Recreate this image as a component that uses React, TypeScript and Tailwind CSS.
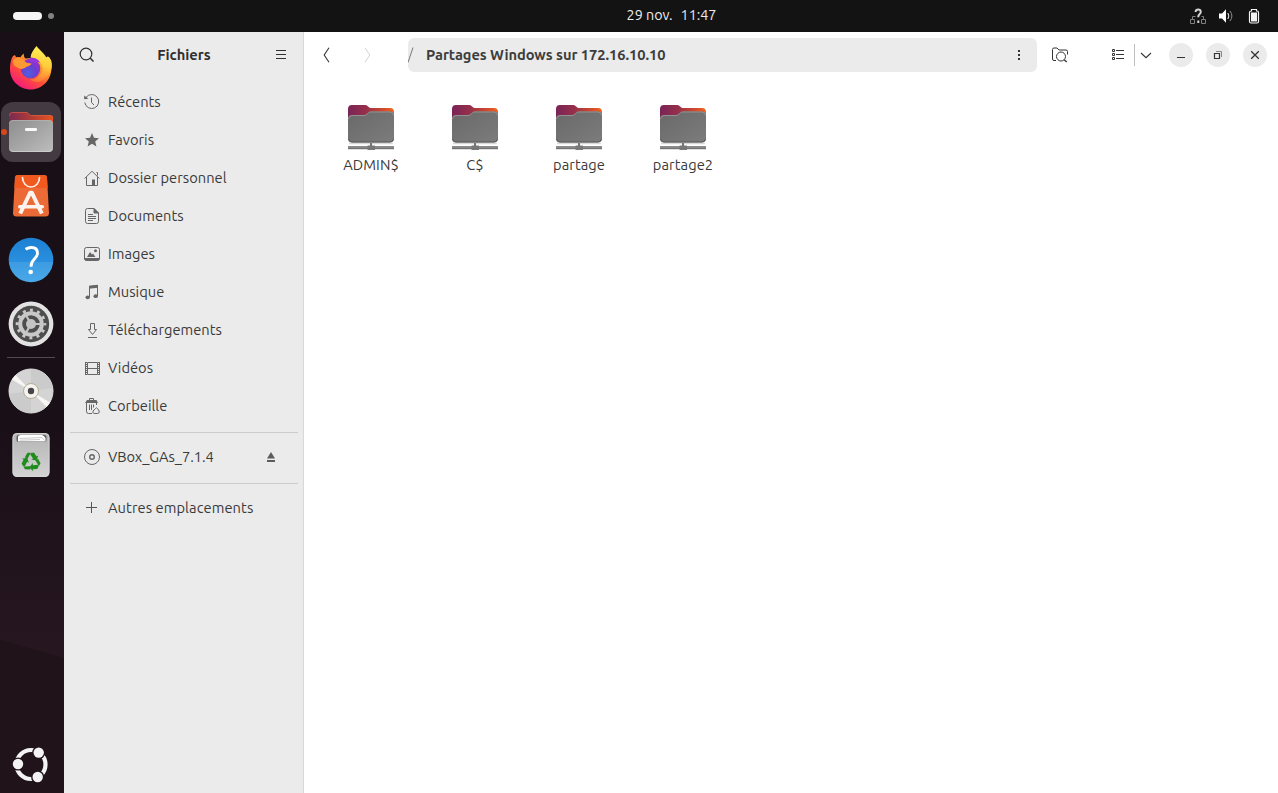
import type { ReactNode } from "react";

function Firefox() {
  return (
    <svg width="46" height="46" viewBox="0 0 46 46" fill="none">
      <defs>
        <linearGradient id="ffBody" x1="36" y1="6" x2="10" y2="42" gradientUnits="userSpaceOnUse">
          <stop offset="0" stopColor="#fff44f" />
          <stop offset=".3" stopColor="#ffa52b" />
          <stop offset=".62" stopColor="#ff5038" />
          <stop offset="1" stopColor="#f4187f" />
        </linearGradient>
        <radialGradient id="ffGlobe" cx=".4" cy=".75" r=".8">
          <stop offset="0" stopColor="#4f5fe0" />
          <stop offset=".5" stopColor="#6a3fd0" />
          <stop offset="1" stopColor="#a92bc8" />
        </radialGradient>
        <linearGradient id="ffTop" x1="34" y1="0" x2="26" y2="40" gradientUnits="userSpaceOnUse">
          <stop offset="0" stopColor="#fff65a" />
          <stop offset=".5" stopColor="#ffcb3a" />
          <stop offset=".8" stopColor="#ff8a36" />
          <stop offset="1" stopColor="#ff5a3a" />
        </linearGradient>
      </defs>
      <path d="M3.500 14c.6-2.400 2-3.400 3.600-4 .1 1 .6 1.800 1.400 2.200 1.200-.2 2.700-.2 4 0 1.100-1.300 2.200-2.900 3.300-3.600-.1 1.700.1 3.500 1.500 4.900L24 13l17-1c2 4 2.500 7 2.500 10.500C43.500 35 34 44.500 23 44.500S2 36 2 24.500C1.900 20.500 2.500 17 3.500 14Z" fill="url(#ffBody)" />
      <path d="M28.500 1c-3 3.500-5.500 7-6 11.500l8 3c4 3 5 7 3.500 11-2 5-7 8-12 8 5.500 4 13 3 17-3 4.500-5 5.500-10 4.500-15-.6-2.500-2.600-4.300-4-5.500.1 1.200 0 1.700-.7 2.500C37 8.500 32 6 28.500 1Z" fill="url(#ffTop)" />
      <circle cx="22.500" cy="23.500" r="9.800" fill="url(#ffGlobe)" />
      <path d="M22 13c4-.8 8.500 1 10 4.500-1.500-.6-3-.7-4-.4 1.500 1 2.500 2.500 2.700 4-2-3.500-5.700-4.500-9.200-4.600Z" fill="#9537da" />
      <path d="M5 15c4-3 9-2.500 12 1.500 1 1.600 4.500 1.500 6.500 2-.4 2.200-4 2.700-5.500 3.700-1.500 1.200-2.500 1.200-4.800 1.800-2.500-.7-3.500-1.500-4.700-2C6.500 21 5 20 5 15Z" fill="#ff9a32" />
    </svg>
  );
}

function FilesApp() {
  return (
    <svg width="46" height="44" viewBox="0 0 46 44">
      <defs>
        <linearGradient id="faBack" x1="0" x2="1" y1="0" y2="0">
          <stop offset="0" stopColor="#772953" />
          <stop offset=".5" stopColor="#b13c37" />
          <stop offset="1" stopColor="#e95420" />
        </linearGradient>
        <linearGradient id="faFront" x1="0" x2="1" y1="0" y2="1">
          <stop offset="0" stopColor="#8d8d8d" />
          <stop offset="1" stopColor="#bdbdbd" />
        </linearGradient>
      </defs>
      <path d="M1 14V5q0-3 3-3h14q1.500 0 2.500 1.200L22.500 5H42q3 0 3 3v9H1Z" fill="url(#faBack)" />
      <path d="M1.500 6q0-3.500 3-3.500h13.500q1.500 0 2.500 1.200l2 1.800H42q3 0 3 3" fill="none" stroke="#e2643f" strokeOpacity=".6" />
      <rect x="1" y="10" width="44" height="32" rx="4" fill="url(#faFront)" />
      <path d="M1.500 13.500q.5-3 3.500-3h36q3 0 3.500 3" fill="none" stroke="#b5b5b5" strokeOpacity=".7" />
      <path d="M2 39.500q1 2 3 2h36q2 0 3-2" fill="none" stroke="#d6d6d6" strokeOpacity=".7" />
      <rect x="17" y="18" width="12" height="3" rx="1.200" fill="#fafafa" />
    </svg>
  );
}

function AppCenter() {
  return (
    <svg width="38" height="44" viewBox="0 0 38 44" fill="none">
      <path d="M5.500 1h27q2.300 0 2.500 2.500L37 39q0 3.500-3.500 3.500h-29Q1 42.500 1 39L3 3.500Q3.200 1 5.500 1Z" fill="#ec6a35" />
      <path d="M5.500 1h27q2.300 0 2.500 2.500l.6 10.500H2.400L3 3.500Q3.200 1 5.500 1Z" fill="#f05a1e" />
      <path d="M10.500 3.500a8.500 9.500 0 0 0 17 0" stroke="#fdeee7" strokeWidth="1.700" strokeLinecap="round" />
      <path d="M18.500 18 8.200 39.500M19.500 18l10.300 21.500" stroke="#fdf3ee" strokeWidth="4" />
      <path d="M17.500 16.800h3l2.500 5h-8z" fill="#fdf3ee" />
      <rect x="6" y="31" width="26" height="3.600" rx="1.800" fill="#fdf3ee" />
    </svg>
  );
}

function Help() {
  return (
    <svg width="46" height="46" viewBox="0 0 46 46" fill="none">
      <defs>
        <linearGradient id="helpTop" x1="0" x2="0" y1="0" y2="1">
          <stop offset="0" stopColor="#1d80d3" />
          <stop offset=".54" stopColor="#2a8fde" />
          <stop offset=".55" stopColor="#3d9be1" />
          <stop offset="1" stopColor="#4aa9ea" />
        </linearGradient>
      </defs>
      <circle cx="23" cy="23" r="22.300" fill="url(#helpTop)" />
      <path d="M17.500 12.200q3-1.800 6-1.700c4 .1 6 2.400 6 5.600 0 3.100-1.700 4.700-3.700 6.600-2 1.900-2.800 3.600-2.800 7" stroke="#fff" strokeWidth="2.900" />
      <circle cx="22.700" cy="35" r="2.300" fill="#fff" />
    </svg>
  );
}

function Settings() {
  return (
    <svg width="46" height="46" viewBox="0 0 46 46" fill="none">
      <circle cx="23" cy="23" r="22.400" fill="#e2e2e2" />
      <circle cx="23" cy="23" r="18.200" fill="#4d4d4d" />
      <circle cx="23" cy="23" r="13.800" stroke="#c8c8c8" strokeWidth="3" strokeDasharray="3 4.226" strokeDashoffset="1.500" />
      <circle cx="23" cy="23" r="10.800" stroke="#c8c8c8" strokeWidth="4" />
      <circle cx="23" cy="23" r="5" fill="#c4c4c4" />
      <path d="M23 23h10M23 23l-5-8.700M23 23l-5 8.700" stroke="#c4c4c4" strokeWidth="2.200" />
    </svg>
  );
}

function Disc() {
  return (
    <svg width="46" height="46" viewBox="0 0 46 46" fill="none">
      <circle cx="23" cy="23" r="22" fill="#d4d4d4" stroke="#dedede" />
      <path d="M23 23V1A22 22 0 0 1 44.500 20ZM23 23v22A22 22 0 0 1 1.500 26Z" fill="#cbcbcb" />
      <path d="M23 23 4 11.500q1.500-2.500 3.500-4.500Zm0 0 19 11.500q-1.500 2.500-3.500 4.500Z" fill="#f7f6f3" />
      <circle cx="23" cy="23" r="7.500" fill="#f5f3ef" stroke="#b6ab94" />
      <circle cx="23" cy="23" r="3.200" fill="#464646" />
    </svg>
  );
}

function Trash() {
  return (
    <svg width="40" height="46" viewBox="0 0 40 46" fill="none">
      <defs>
        <linearGradient id="trashBody" x1="0" x2="0" y1="0" y2="1">
          <stop offset="0" stopColor="#b4b4b4" />
          <stop offset="1" stopColor="#d3d3d3" />
        </linearGradient>
      </defs>
      <rect x="1.500" y="1" width="37" height="44" rx="4.500" fill="url(#trashBody)" />
      <rect x="2" y="1.500" width="36" height="43" rx="4" stroke="#d8d8d8" strokeOpacity=".8" />
      <rect x="5.500" y="3" width="30" height="7" rx="2" fill="#606060" />
      <path d="M7 9.500V5q0-2 3-2h21q3 1 3.500 3.500v3Z" fill="#fff" />
      <path d="M8.500 6.500 31 5.500l2.500 3M9 8.200l20-.7" stroke="#bdbdbd" strokeWidth=".8" />
      <g transform="translate(20 29.800)" fill="#1f8c1c">
        {[0, 120, 240].map((a) => (
          <g key={a} transform={`rotate(${a})`}>
            <path d="M-6.200-4.500-3.500-9H-.2L-3.600-2.900Z" />
            <path d="M.3-9H3.200L5.500-5.300 7.300-6.300 5.500-1.300.2-2.300 2-3.300-.8-7.500Z" />
          </g>
        ))}
      </g>
    </svg>
  );
}

function UbuntuLogo() {
  return (
    <svg width="38" height="38" viewBox="0 0 38 38" fill="none">
      <circle cx="19" cy="18.500" r="14.500" stroke="#f3f3f3" strokeWidth="4.200" />
      <circle cx="26.700" cy="6.600" r="6.600" fill="#20141a" />
      <circle cx="6" cy="18" r="6.600" fill="#20141a" />
      <circle cx="25.700" cy="31" r="6.600" fill="#20141a" />
      <circle cx="26.700" cy="6.600" r="5.200" fill="#f3f3f3" />
      <circle cx="6" cy="18" r="5.200" fill="#f3f3f3" />
      <circle cx="25.700" cy="31" r="5.200" fill="#f3f3f3" />
    </svg>
  );
}

function Svg({ children, size = 16, className = "" }: { children: ReactNode; size?: number; className?: string }) {
  return (
    <svg width={size} height={size} viewBox={`0 0 ${size} ${size}`} fill="none" stroke="currentColor" className={`shrink-0 ${className}`}>
      {children}
    </svg>
  );
}

const places = [
  {
    name: "Récents",
    icon: (
      <>
        <path d="M2 3.500A7 7 0 1 1 .8 8.500" />
        <path d="M.2 5.200V1.600l4.200 3.200Z" fill="currentColor" stroke="none" />
        <path d="M7.500 3.500v5l2.500 2.500" />
      </>
    ),
  },
  {
    name: "Favoris",
    icon: <path d="m8 1 2 4.800 5 .4-3.800 3.300 1.200 4.900L8 11.800l-4.400 2.600 1.200-4.900L1 6.200l5-.4Z" fill="currentColor" stroke="none" />,
  },
  {
    name: "Dossier personnel",
    icon: (
      <>
        <path d="M.7 8.500 8 1.200l7.300 7.300M2.500 7v8.500h11V7M12.500 2.500h1v3" />
        <path d="M8 9.500h3V15H8z" fill="currentColor" stroke="none" />
      </>
    ),
  },
  {
    name: "Documents",
    icon: (
      <>
        <path d="M3.500.5H10L14.500 5v8.500a2 2 0 0 1-2 2h-9a2 2 0 0 1-2-2v-11a2 2 0 0 1 2-2Z" />
        <path d="M10 .5V5h4.500Z" fill="currentColor" />
        <path d="M4 6.500h5M4 8.500h8M4 10.500h8M4 12.500h5" />
      </>
    ),
  },
  {
    name: "Images",
    icon: (
      <>
        <rect x=".5" y="1.500" width="15" height="12.500" rx="2" />
        <path d="M.5 12.500h15a2 2 0 0 1-2 2h-11a2 2 0 0 1-2-2Z" fill="currentColor" />
        <path d="m3 11 3-5 2 2.500L9 7.500 11.500 11Z" fill="currentColor" stroke="none" />
        <circle cx="11.500" cy="4.800" r="1.500" fill="currentColor" stroke="none" />
      </>
    ),
  },
  {
    name: "Musique",
    icon: (
      <>
        <path d="M5.500 13V2.500l8-1V12" />
        <path d="M5 1.800 14 .7v3L5 4.800Z" fill="currentColor" stroke="none" />
        <ellipse cx="3.700" cy="13.300" rx="2.200" ry="1.900" fill="currentColor" stroke="none" />
        <ellipse cx="11.700" cy="12.200" rx="2.200" ry="1.900" fill="currentColor" stroke="none" />
      </>
    ),
  },
  {
    name: "Téléchargements",
    icon: <path d="M6.500 1.500h4v6h2l-4 5-4-5h2ZM4 15.500h9" />,
  },
  {
    name: "Vidéos",
    icon: (
      <>
        <path d="M1.500 2v13M15.500 2v13M3.500 2.500h10v12h-10ZM3.500 8.500h10" />
        <path d="M2.500 2v13M14.500 2v13" strokeDasharray="1 1" />
      </>
    ),
  },
  {
    name: "Corbeille",
    icon: (
      <>
        <path d="M5.500 2.500v-2h4v2" />
        <path d="M3 2h9.500L14 5H1Z" fill="currentColor" stroke="none" />
        <path d="M2.500 5v8.500q0 2 2 2H8M5.500 6.500V12M7.500 6.500V12M9.500 6.500v3M12.500 5v2" />
        <path d="M11.500 10.500q1-1.500 2 0l1.700 2.500q.5 2.500-1.700 2.500h-3.300q-2-.5-1.200-2.500Z" />
      </>
    ),
  },
];

function NetworkFolder() {
  return (
    <svg width="50" height="50" viewBox="0 0 50 50" fill="none">
      <defs>
        <linearGradient id="nfBack" x1="0" x2="1" y1="0" y2="0">
          <stop offset="0" stopColor="#792457" />
          <stop offset=".4" stopColor="#97304a" />
          <stop offset=".8" stopColor="#d64e2a" />
          <stop offset="1" stopColor="#f26322" />
        </linearGradient>
        <linearGradient id="nfFront" x1="0" x2="1" y1="0" y2="1">
          <stop offset="0" stopColor="#696969" />
          <stop offset="1" stopColor="#7c7c7c" />
        </linearGradient>
      </defs>
      <path d="M3 40.500h44" stroke="#000" strokeOpacity=".15" strokeWidth="1.500" />
      <path d="M2 16V6q0-4 4-4h13q1.800 0 2.800 1.200L24 5h20q4 0 4 4v10H2Z" fill="url(#nfBack)" />
      <path d="M2 16q0-4 4-4h12q1.500 0 2.700-1.100l1.600-1.600Q23.300 8.500 24.500 8.500H44q4 0 4 4V35.500q0 4-4 4H6q-4 0-4-4Z" fill="url(#nfFront)" />
      <path d="M2.500 16q0-3.500 3.500-3.500h12q1.700 0 3-1.200l1.500-1.500Q23.500 9 24.500 9H44q3.500 0 3.500 3.500" stroke="#929292" />
      <path d="M2.500 36q.5 3 3.500 3h38q3 0 3.500-3" stroke="#5b5b5b" />
      <path d="M25 40v3" stroke="#737373" strokeWidth="2" />
      <path d="M2 43.500h46" stroke="#8a8a8a" />
      <path d="M2 44.500h46" stroke="#8a8a8a" />
      <path d="M2 45.500h46" stroke="#747474" />
      <path d="M2 46.500h46" stroke="#e0e0e0" />
      <rect x="21.500" y="42.500" width="7.500" height="4.500" rx=".5" fill="#777" />
    </svg>
  );
}

const shares = ["ADMIN$", "C$", "partage", "partage2"];

function Slot({ children }: { children: ReactNode }) {
  return <div className="flex h-16 w-full shrink-0 items-center justify-center">{children}</div>;
}

function TopBar() {
  return (
    <header className="flex h-8 shrink-0 items-center bg-[#131313] text-[#ededed]">
      <div className="flex flex-1 items-center gap-[6px] pl-[13px]">
        <span className="h-2 w-[29px] rounded-full bg-[#f5f5f5]" />
        <span className="size-[6px] rounded-full bg-[#828282]" />
      </div>
      <div className="flex gap-2 pb-px pl-[68px] text-[14.3px]">
        <span>29 nov.</span>
        <span>11:47</span>
      </div>
      <div className="flex flex-1 items-center justify-end gap-3 pr-4">
        <Svg className="text-[#808080]">
          <path d="M.5 11.500h4v4h-4ZM11.500 11.500h4v4h-4ZM2.500 11V8.500h3M13.500 11V8.500h-2" />
          <path d="M5.500 4q.3-2.500 2.700-2.500t2.600 2.300q0 1.500-1.300 2.500t-1.300 3M8.300 12.500V15" strokeWidth="2" stroke="#d4d4d4" />
        </Svg>
        <Svg>
          <path d="M1 5.500h3l4-4.200v13.400l-4-4.200H1Z" fill="#fff" stroke="none" />
          <path d="M9.800 5q2.200 3 0 6" stroke="#fff" />
          <path d="M12 3q3.800 5 0 10" stroke="#8e8e8e" />
        </Svg>
        <Svg>
          <path d="M5.500 1.500h5V3H11q1.500 0 1.500 1.500v9q0 1.500-1.500 1.500H5q-1.500 0-1.500-1.500v-9Q3.500 3 5 3h.5Z" stroke="#f4f4f4" strokeWidth="1.200" />
          <rect x="5" y="4.500" width="6" height="9" fill="#f4f4f4" stroke="none" />
        </Svg>
      </div>
    </header>
  );
}

function Dock() {
  return (
    <nav className="flex w-16 shrink-0 flex-col items-start bg-linear-to-b from-[#190f17] from-50% to-[#26161f] to-80% pt-1">
      <div className="flex w-[62px] flex-1 flex-col">
        <Slot><Firefox /></Slot>
        <Slot>
          <div className="relative flex size-[60px] items-center justify-center rounded-xl bg-[#433a42]">
            <span className="absolute top-[27px] left-0 size-[6px] rounded-full bg-[#d9481c]" />
            <FilesApp />
          </div>
        </Slot>
        <Slot><AppCenter /></Slot>
        <Slot><Help /></Slot>
        <Slot><Settings /></Slot>
        <div className="mx-[7px] mt-px mb-px h-px shrink-0 bg-[#514a50]" />
        <Slot><Disc /></Slot>
        <Slot><Trash /></Slot>
      </div>
      <div className="h-[153px] w-16 overflow-hidden">
        <svg width="64" height="153" viewBox="0 0 64 153">
          <path d="M0 0 64 18V153H0Z" fill="#20141a" />
          <g transform="translate(12 106)"><UbuntuLogo /></g>
        </svg>
      </div>
    </nav>
  );
}

function Sidebar() {
  return (
    <aside className="flex w-60 shrink-0 flex-col border-r border-[#d8d8d8] bg-[#ebebeb]">
      <div className="flex h-[46px] items-center justify-between pr-[14px] pl-[15px] text-[#303030]">
        <Svg>
          <circle cx="7" cy="7" r="5.800" strokeWidth="1.200" />
          <path d="m11.300 11.300 3.200 3.200" strokeWidth="1.600" />
        </Svg>
        <span className="font-bold">Fichiers</span>
        <Svg>
          <path d="M3 3.500h10M3 7.500h10M3 11.500h10" />
        </Svg>
      </div>
      <ul className="pt-[5px]">
        {places.map((p) => (
          <li key={p.name} className="flex h-[38px] items-center gap-2 pl-5">
            <Svg className="text-[#666]">{p.icon}</Svg>
            <span className="tracking-[0.03px]">{p.name}</span>
          </li>
        ))}
      </ul>
      <div className="mt-[7px] mr-[5px] ml-[6px] h-px bg-[#cbcbcb]" />
      <div className="mt-[5px] flex h-[38px] items-center gap-2 pr-6 pl-5">
        <Svg className="text-[#666]">
          <circle cx="8" cy="8" r="7.500" />
          <circle cx="8" cy="8" r="2.300" strokeWidth="1.400" />
        </Svg>
        <span className="flex-1 tracking-[-0.07px]">VBox_GAs_7.1.4</span>
        <Svg className="text-[#5c5c5c]">
          <path d="m8 3 4 6.500H4ZM4 11h8v2H4Z" fill="currentColor" stroke="none" />
        </Svg>
      </div>
      <div className="mt-[7px] mr-[5px] ml-[6px] h-px bg-[#cbcbcb]" />
      <div className="mt-[5px] flex h-[38px] items-center gap-2 pl-5">
        <Svg className="text-[#555]">
          <path d="M7.500 2v11M2 7.500h11" />
        </Svg>
        <span className="tracking-[0.08px]">Autres emplacements</span>
      </div>
    </aside>
  );
}

function Toolbar() {
  return (
    <div className="flex h-[46px] items-center text-[#353535]">
      <Svg className="ml-[14px]"><path d="M11 .8 6.200 8 11 15.200" strokeWidth="1.100" /></Svg>
      <Svg className="ml-[25px] text-[#d3d3d3]"><path d="M6 .8 10.800 8 6 15.200" /></Svg>
      <div className="ml-[33px] flex h-[34px] w-[629px] items-center rounded-md bg-[#ebebeb] pr-[10px]">
        <Svg className="text-[#777]"><path d="M0 15.500 5 .5" /></Svg>
        <span className="ml-[2px] flex-1 font-bold tracking-[-0.05px] text-[#3d3d3d]">Partages Windows sur 172.16.10.10</span>
        <Svg>
          <path d="M7 3h2v2H7ZM7 7h2v2H7ZM7 11h2v2H7Z" fill="currentColor" stroke="none" />
        </Svg>
      </div>
      <Svg size={18} className="ml-[14px]">
        <path d="M5 14.500H3q-1.500 0-1.500-1.500V3.500Q1.500 2 3 2h3l2 2h7q1.500 0 1.500 1.500v3" />
        <circle cx="10" cy="10.500" r="4.500" />
        <path d="m13.200 13.700 2.500 2.300" strokeWidth="1.400" />
      </Svg>
      <Svg className="ml-[41px]">
        <path d="M2.500 2.500h2v2h-2ZM2.500 6.500h2v2h-2ZM2.500 10.500h2v2h-2ZM6 3.500h8M6 7.500h8M6 11.500h8" />
      </Svg>
      <span className="ml-[8px] h-[22px] w-px bg-[#bdbdbd]" />
      <Svg className="ml-[3px]"><path d="m3 6 5 4.700L13 6" strokeWidth="1.100" /></Svg>
      <div className="ml-[15px] flex gap-[13px]">
        <span className="flex size-6 items-center justify-center rounded-full bg-[#ebebeb]">
          <Svg><path d="M4 10.500h8" /></Svg>
        </span>
        <span className="flex size-6 items-center justify-center rounded-full bg-[#ebebeb]">
          <Svg>
            <path d="M6 4.500h5.500V10" stroke="#888" />
            <path d="M4.500 6.500h5v5h-5Z" strokeWidth="1.200" />
          </Svg>
        </span>
        <span className="flex size-6 items-center justify-center rounded-full bg-[#ebebeb]">
          <Svg><path d="m4.200 4.200 7.600 7.600M11.800 4.200l-7.600 7.600" strokeWidth="1.300" /></Svg>
        </span>
      </div>
    </div>
  );
}

export default function App() {
  return (
    <div className="flex h-screen w-full flex-col overflow-hidden bg-white font-['Ubuntu','Noto_Sans',sans-serif] text-[14.667px] text-[#3a3a3a]">
      <TopBar />
      <div className="flex min-h-0 flex-1">
        <Dock />
        <Sidebar />
        <main className="flex flex-1 flex-col">
          <Toolbar />
          <div className="flex pt-[25px] pl-[15px]">
            {shares.map((name) => (
              <div key={name} className="flex w-[104px] flex-col items-center">
                <NetworkFolder />
                <span className="mt-[2px] leading-5 tracking-[0.08px]">{name}</span>
              </div>
            ))}
          </div>
        </main>
      </div>
    </div>
  );
}
